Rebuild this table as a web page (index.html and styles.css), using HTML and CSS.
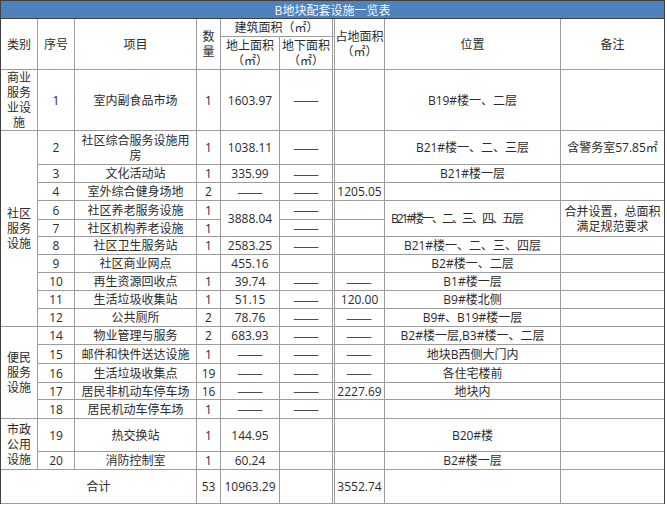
FILE: index.html
```html
<!DOCTYPE html>
<html lang="zh-CN">
<head>
<meta charset="utf-8">
<title>B地块配套设施一览表</title>
<link rel="stylesheet" href="styles.css">
</head>
<body>
<div class="sheet">
  <div class="title">B地块配套设施一览表</div>
  <table class="grid">
    <colgroup>
      <col class="w1"><col class="w2"><col class="w3"><col class="w4"><col class="w5"><col class="w6"><col class="w7"><col class="w8"><col class="w9">
    </colgroup>
    <tr class="h18">
      <th class="cat" rowspan="2">类别</th>
      <th rowspan="2">序号</th>
      <th rowspan="2">项目</th>
      <th rowspan="2">数量</th>
      <th class="dl" colspan="2">建筑面积（㎡）</th>
      <th rowspan="2">占地面积（㎡）</th>
      <th rowspan="2">位置</th>
      <th class="e" rowspan="2">备注</th>
    </tr>
    <tr class="h33">
      <th>地上面积（㎡）</th>
      <th class="dl">地下面积（㎡）</th>
    </tr>
    <tr class="h61">
      <td class="cat">商业服务业设施</td>
      <td>1</td><td class="item">室内副食品市场</td><td>1</td><td>1603.97</td><td class="dl"><span class="dash">——</span></td><td></td><td>B19#楼一、二层</td><td class="e"></td>
    </tr>
    <tr class="h34">
      <td class="cat" rowspan="10">社区服务设施</td>
      <td>2</td><td class="item">社区综合服务设施用房</td><td>1</td><td>1038.11</td><td class="dl"><span class="dash">——</span></td><td></td><td>B21#楼一、二、三层</td><td class="e">含警务室57.85㎡</td>
    </tr>
    <tr class="h18">
      <td>3</td><td class="item">文化活动站</td><td>1</td><td>335.99</td><td class="dl"><span class="dash">——</span></td><td></td><td>B21#楼一层</td><td class="e"></td>
    </tr>
    <tr class="h18">
      <td>4</td><td class="item">室外综合健身场地</td><td>2</td><td><span class="dash">——</span></td><td class="dl"><span class="dash">——</span></td><td>1205.05</td><td></td><td class="e"></td>
    </tr>
    <tr class="h19">
      <td>6</td><td class="item">社区养老服务设施</td><td>1</td><td rowspan="2">3888.04</td><td class="dl"><span class="dash">——</span></td><td></td><td class="tight" rowspan="2">B21#楼一、二、三、四、五层</td><td class="e note" rowspan="2">合并设置，总面积满足规范要求</td>
    </tr>
    <tr class="h17">
      <td>7</td><td class="item">社区机构养老设施</td><td>1</td><td class="dl"><span class="dash">——</span></td><td></td>
    </tr>
    <tr class="h18">
      <td>8</td><td class="item">社区卫生服务站</td><td>1</td><td>2583.25</td><td class="dl"><span class="dash">——</span></td><td></td><td>B21#楼一、二、三、四层</td><td class="e"></td>
    </tr>
    <tr class="h18">
      <td>9</td><td class="item">社区商业网点</td><td></td><td>455.16</td><td class="dl"></td><td></td><td>B2#楼一、二层</td><td class="e"></td>
    </tr>
    <tr class="h18">
      <td>10</td><td class="item">再生资源回收点</td><td>1</td><td>39.74</td><td class="dl"><span class="dash">——</span></td><td><span class="dash">——</span></td><td>B1#楼一层</td><td class="e"></td>
    </tr>
    <tr class="h18">
      <td>11</td><td class="item">生活垃圾收集站</td><td>1</td><td>51.15</td><td class="dl"><span class="dash">——</span></td><td>120.00</td><td>B9#楼北侧</td><td class="e"></td>
    </tr>
    <tr class="h18">
      <td>12</td><td class="item">公共厕所</td><td>2</td><td>78.76</td><td class="dl"><span class="dash">——</span></td><td><span class="dash">——</span></td><td>B9#、B19#楼一层</td><td class="e"></td>
    </tr>
    <tr class="h18">
      <td class="cat" rowspan="5">便民服务设施</td>
      <td>14</td><td class="item">物业管理与服务</td><td>2</td><td>683.93</td><td class="dl"><span class="dash">——</span></td><td><span class="dash">——</span></td><td>B2#楼一层,B3#楼一、二层</td><td class="e"></td>
    </tr>
    <tr class="h19">
      <td>15</td><td class="item">邮件和快件送达设施</td><td>1</td><td><span class="dash">——</span></td><td class="dl"><span class="dash">——</span></td><td><span class="dash">——</span></td><td>地块B西侧大门内</td><td class="e"></td>
    </tr>
    <tr class="h19">
      <td>16</td><td class="item">生活垃圾收集点</td><td>19</td><td><span class="dash">——</span></td><td class="dl"><span class="dash">——</span></td><td><span class="dash">——</span></td><td>各住宅楼前</td><td class="e"></td>
    </tr>
    <tr class="h17">
      <td>17</td><td class="item">居民非机动车停车场</td><td>16</td><td><span class="dash">——</span></td><td class="dl"><span class="dash">——</span></td><td>2227.69</td><td>地块内</td><td class="e"></td>
    </tr>
    <tr class="h19">
      <td>18</td><td class="item">居民机动车停车场</td><td>1</td><td><span class="dash">——</span></td><td class="dl"><span class="dash">——</span></td><td></td><td></td><td class="e"></td>
    </tr>
    <tr class="h33">
      <td class="cat" rowspan="2">市政公用设施</td>
      <td>19</td><td class="item">热交换站</td><td>1</td><td>144.95</td><td class="dl"></td><td></td><td>B20#楼</td><td class="e"></td>
    </tr>
    <tr class="h18">
      <td>20</td><td class="item">消防控制室</td><td>1</td><td>60.24</td><td class="dl"></td><td></td><td>B2#楼一层</td><td class="e"></td>
    </tr>
    <tr class="h34">
      <td colspan="3">合计</td><td>53</td><td>10963.29</td><td class="dl"></td><td>3552.74</td><td></td><td class="e"></td>
    </tr>
  </table>
</div>
</body>
</html>
```

FILE: styles.css
```css
html, body {
  margin: 0;
  padding: 0;
  background: #fff;
}

body {
  font-family: "Open Sans", "Noto Sans CJK SC", sans-serif;
  font-size: 12px;
  color: #2b2b2b;
}

.sheet {
  width: 663px;
  border-left: 1px solid #404040;
  border-right: 1px solid #404040;
  border-top: 1px solid #404040;
}

.title {
  height: 17px;
  line-height: 17px;
  background: #4f81bd;
  color: #f4f7fb;
  text-align: center;
  border-bottom: 1px solid #404040;
  font-family: "Noto Sans CJK SC", sans-serif;
}

.grid {
  width: 663px;
  table-layout: fixed;
  border-collapse: separate;
  border-spacing: 0;
}

.w1 { width: 37px; }
.w2 { width: 37px; }
.w3 { width: 122px; }
.w4 { width: 24px; }
.w5 { width: 59px; }
.w6 { width: 55px; }
.w7 { width: 50px; }
.w8 { width: 176px; }
.w9 { width: 103px; }

.grid th,
.grid td {
  padding: 0;
  border-right: 1px solid #9c9c9c;
  border-bottom: 1px solid #9c9c9c;
  text-align: center;
  vertical-align: middle;
  font-weight: normal;
  line-height: 15px;
  overflow: hidden;
  white-space: normal;
}

.grid .e { border-right: none; }
.grid .dl { border-right: 3px double #9c9c9c; }
.grid .cat { padding: 0 4px; }
.grid .item { padding: 0 3px; }
.grid .tight {
  letter-spacing: -2px;
  white-space: nowrap;
  padding-right: 32px;
}

.dash {
  display: inline-block;
  font-family: "Noto Sans CJK SC", sans-serif;
  color: #1a1a1a;
  transform: scaleX(1.3);
}

.h17 { height: 17px; }
.h18 { height: 18px; }
.h19 { height: 19px; }
.h33 { height: 33px; }
.h34 { height: 34px; }
.h61 { height: 61px; }
```
